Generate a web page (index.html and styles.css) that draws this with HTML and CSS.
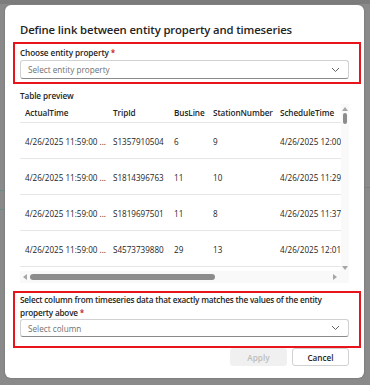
FILE: index.html
```html
<!DOCTYPE html>
<html>
<head>
<meta charset="utf-8">
<link rel="stylesheet" href="styles.css">
</head>
<body>
<div class="backdrop">
  <div class="dialog">
    <h1 class="title">Define link between entity property and timeseries</h1>
    <section class="mark mark-first">
      <div class="label label-one">Choose entity property <span class="req">*</span></div>
      <div class="select">
        <span class="placeholder">Select entity property</span>
        <svg class="chev" width="9" height="6" viewBox="0 0 9 6"><path d="M1 1 L4.5 4.5 L8 1" fill="none" stroke="#616161" stroke-width="1"/></svg>
      </div>
    </section>
    <div class="label preview-label">Table preview</div>
    <div class="grid">
      <div class="tablewrap">
        <table class="data">
          <colgroup>
            <col class="c1"><col class="c2"><col class="c3"><col class="c4"><col class="c5">
          </colgroup>
          <thead>
            <tr><th>ActualTime</th><th>TripId</th><th>BusLine</th><th>StationNumber</th><th>ScheduleTime</th></tr>
          </thead>
          <tbody>
            <tr><td>4/26/2025 11:59:00 ...</td><td>S1357910504</td><td>6</td><td>9</td><td>4/26/2025 12:00:00 PM</td></tr>
            <tr><td>4/26/2025 11:59:00 ...</td><td>S1814396763</td><td>11</td><td>10</td><td>4/26/2025 11:29:00 AM</td></tr>
            <tr><td>4/26/2025 11:59:00 ...</td><td>S1819697501</td><td>11</td><td>8</td><td>4/26/2025 11:37:00 AM</td></tr>
            <tr><td>4/26/2025 11:59:00 ...</td><td>S4573739880</td><td>29</td><td>13</td><td>4/26/2025 12:01:00 PM</td></tr>
          </tbody>
        </table>
      </div>
      <div class="vbar">
        <span class="tri tri-up"></span>
        <span class="vthumb"></span>
        <span class="vspace"></span>
        <span class="tri tri-down"></span>
      </div>
      <div class="hbar">
        <span class="tri tri-left"></span>
        <span class="hthumb"></span>
        <span class="hspace"></span>
        <span class="tri tri-right"></span>
      </div>
      <div class="corner"></div>
    </div>
    <section class="mark mark-second">
      <div class="label label-two">Select column from timeseries data that exactly matches the values of the entity property above <span class="req">*</span></div>
      <div class="select select-two">
        <span class="placeholder">Select column</span>
        <svg class="chev" width="9" height="6" viewBox="0 0 9 6"><path d="M1 1 L4.5 4.5 L8 1" fill="none" stroke="#616161" stroke-width="1"/></svg>
      </div>
    </section>
    <div class="actions">
      <button class="btn btn-apply" disabled>Apply</button>
      <button class="btn btn-cancel">Cancel</button>
    </div>
  </div>
</div>
</body>
</html>
```

FILE: styles.css
```css
* { box-sizing: border-box; }
html, body { margin: 0; padding: 0; }
body {
  width: 370px;
  height: 385px;
  overflow: hidden;
  background: #8a8a8a;
  font-family: "Open Sans", "Noto Sans", sans-serif;
  color: #242424;
}
.backdrop {
  height: 385px;
  padding: 5px 6px 0 5px;
  background:
    linear-gradient(#7c7c7c, #7c7c7c) 0 0 / 100% 4px no-repeat,
    linear-gradient(#5f8f8a, #5f8f8a) 0 190px / 4px 1px no-repeat,
    linear-gradient(#5f8f8a, #5f8f8a) 0 209px / 4px 1px no-repeat,
    linear-gradient(#7f7f7f, #7f7f7f) 364px 187px / 6px 1px no-repeat,
    #8a8a8a;
}
.dialog {
  width: 359px;
  height: 373px;
  background: #fff;
  border-radius: 6px;
  padding: 17px 15px 0 15px;
  box-shadow: 0 0 2px rgba(0,0,0,0.25);
}
.title {
  margin: 0;
  font-size: 11.3px;
  line-height: 16px;
  font-weight: 600;
  letter-spacing: -0.12px;
  white-space: nowrap;
}
.mark {
  border: 2px solid #e8141c;
  margin-left: -7px;
  margin-right: -12px;
  padding-left: 5px;
  padding-right: 10px;
}
.mark-first {
  margin-top: 4px;
  padding-top: 1px;
  padding-bottom: 3px;
}
.label {
  font-size: 8.2px;
  line-height: 12px;
  font-weight: 600;
  letter-spacing: -0.1px;
}
.label-one { line-height: 15px; }
.req { color: #c50f1f; }
.select {
  height: 19px;
  border: 1px solid #d1d1d1;
  border-bottom-color: #8a8a8a;
  border-radius: 3px;
  display: flex;
  align-items: center;
  justify-content: space-between;
  padding: 0 8px 0 7px;
}
.placeholder {
  font-size: 8.2px;
  color: #707070;
}
.chev { display: block; }
.preview-label {
  margin-top: 6px;
}
.grid {
  margin-top: 2px;
  display: grid;
  grid-template-columns: 321px 8px;
  grid-template-rows: 167px 12px;
  background: #f9f9f9;
}
.tablewrap {
  overflow: hidden;
  background: #fff;
}
.data {
  border-collapse: collapse;
  table-layout: fixed;
  width: 420px;
  font-size: 8.1px;
}
.c1 { width: 88px; }
.c2 { width: 61px; }
.c3 { width: 39px; }
.c4 { width: 67px; }
.c5 { width: 165px; }
.data th, .data td {
  text-align: left;
  padding: 0 0 0 5px;
  white-space: nowrap;
  overflow: hidden;
  border-bottom: 1px solid #e6e6e6;
}
.data th {
  height: 18px;
  font-weight: 600;
  font-size: 8.2px;
  letter-spacing: -0.1px;
}
.data td {
  height: 36px;
  padding-top: 3px;
  color: #242424;
}
.vbar {
  display: flex;
  flex-direction: column;
  align-items: center;
  padding: 1px 0 0;
}
.vthumb {
  width: 4px;
  height: 11px;
  background: #8c8c8c;
  border-radius: 2px;
  margin-top: 2px;
}
.vspace { flex: 1; }
.tri { width: 0; height: 0; display: block; }
.tri-up { border-left: 3px solid transparent; border-right: 3px solid transparent; border-bottom: 4px solid #a6a6a6; margin-top: 2px; }
.tri-down { border-left: 3px solid transparent; border-right: 3px solid transparent; border-top: 4px solid #a6a6a6; margin-bottom: 1px; }
.hbar {
  display: flex;
  align-items: center;
  padding: 0 4px 0 3px;
}
.tri-left { border-top: 3px solid transparent; border-bottom: 3px solid transparent; border-right: 4px solid #a6a6a6; }
.tri-right { border-top: 3px solid transparent; border-bottom: 3px solid transparent; border-left: 4px solid #a6a6a6; }
.hthumb {
  width: 185px;
  height: 6px;
  background: #8c8c8c;
  border-radius: 3px;
  margin-left: 3px;
}
.hspace { flex: 1; }
.corner { background: #f9f9f9; }
.mark-second {
  margin-top: 8px;
  padding-top: 0;
  padding-bottom: 9px;
}
.label-two {
  line-height: 12.5px;
  letter-spacing: -0.2px;
  padding-top: 1px;
}
.select-two {
  height: 18px;
}
.actions {
  display: flex;
  justify-content: flex-end;
  gap: 5px;
  margin-top: 0;
}
.btn {
  width: 57px;
  height: 18px;
  border-radius: 3px;
  font-family: inherit;
  font-size: 8.2px;
  font-weight: 600;
  padding: 0;
}
.btn-apply {
  background: #f0f0f0;
  border: 1px solid #f0f0f0;
  color: #bdbdbd;
}
.btn-cancel {
  background: #fff;
  border: 1px solid #d1d1d1;
  color: #242424;
}
```
